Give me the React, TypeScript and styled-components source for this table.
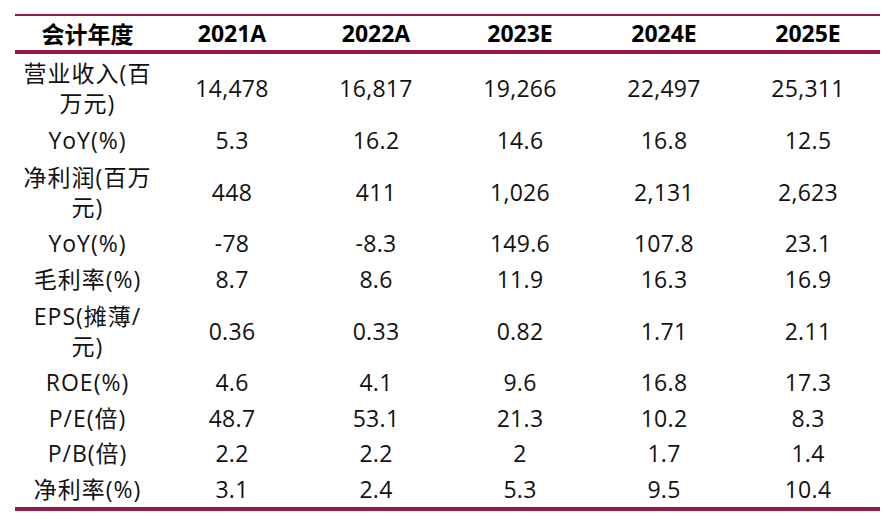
import * as React from "react"
import styled, {createGlobalStyle} from "styled-components";

const RULE = '#961a43'

const GlobalStyle = createGlobalStyle`
  html, body {
    margin: 0;
    padding: 0;
    background: #fff;
  }
`

const years = ['2021A', '2022A', '2023E', '2024E', '2025E']

const rows = [
  {label: ['营业收入(百', '万元)'], values: ['14,478', '16,817', '19,266', '22,497', '25,311']},
  {label: ['YoY(%)'], values: ['5.3', '16.2', '14.6', '16.8', '12.5']},
  {label: ['净利润(百万', '元)'], values: ['448', '411', '1,026', '2,131', '2,623']},
  {label: ['YoY(%)'], values: ['-78', '-8.3', '149.6', '107.8', '23.1']},
  {label: ['毛利率(%)'], values: ['8.7', '8.6', '11.9', '16.3', '16.9']},
  {label: ['EPS(摊薄/', '元)'], values: ['0.36', '0.33', '0.82', '1.71', '2.11']},
  {label: ['ROE(%)'], values: ['4.6', '4.1', '9.6', '16.8', '17.3']},
  {label: ['P/E(倍)'], values: ['48.7', '53.1', '21.3', '10.2', '8.3']},
  {label: ['P/B(倍)'], values: ['2.2', '2.2', '2', '1.7', '1.4']},
  {label: ['净利率(%)'], values: ['3.1', '2.4', '5.3', '9.5', '10.4']},
]

const App = () => {
  return (
    <Page>
      <GlobalStyle />
      <Table>
        <HeadRow>
          <HeadCell>会计年度</HeadCell>
          {years.map(y => <HeadCell key={y}>{y}</HeadCell>)}
        </HeadRow>
        {rows.map((row, i) => (
          <Row key={i} tall={row.label.length > 1}>
            <Label>
              {row.label.map((line, j) => <Line key={j}>{line}</Line>)}
            </Label>
            {row.values.map((v, j) => <Cell key={j}>{v}</Cell>)}
          </Row>
        ))}
      </Table>
    </Page>
  )
}

const Page = styled.div`
  padding: 14px 0 0 15px;
  font-family: 'Open Sans', 'Noto Sans CJK SC', sans-serif;
  color: #111;
`
const Table = styled.div`
  width: 865px;
  border-top: 2px solid ${RULE};
  border-bottom: 4px solid ${RULE};
`
const HeadRow = styled.div`
  display: grid;
  grid-template-columns: 145px repeat(5, 144px);
  height: 34px;
  border-bottom: 4px solid ${RULE};
`
const HeadCell = styled.div`
  display: flex;
  align-items: center;
  justify-content: center;
  font-size: 23px;
  font-weight: 700;
  color: #000;
`
const Row = styled.div<{tall?: boolean}>`
  display: grid;
  grid-template-columns: 145px repeat(5, 144px);
  height: ${p => p.tall ? '68px' : '35.5px'};
`
const Label = styled.div`
  display: flex;
  flex-direction: column;
  align-items: center;
  justify-content: center;
  font-size: 23px;
  line-height: 30px;
  letter-spacing: 1px;
`
const Line = styled.div`
  white-space: nowrap;
`
const Cell = styled.div`
  display: flex;
  align-items: center;
  justify-content: center;
  font-size: 23px;
  letter-spacing: 0.3px;
`

export default App
